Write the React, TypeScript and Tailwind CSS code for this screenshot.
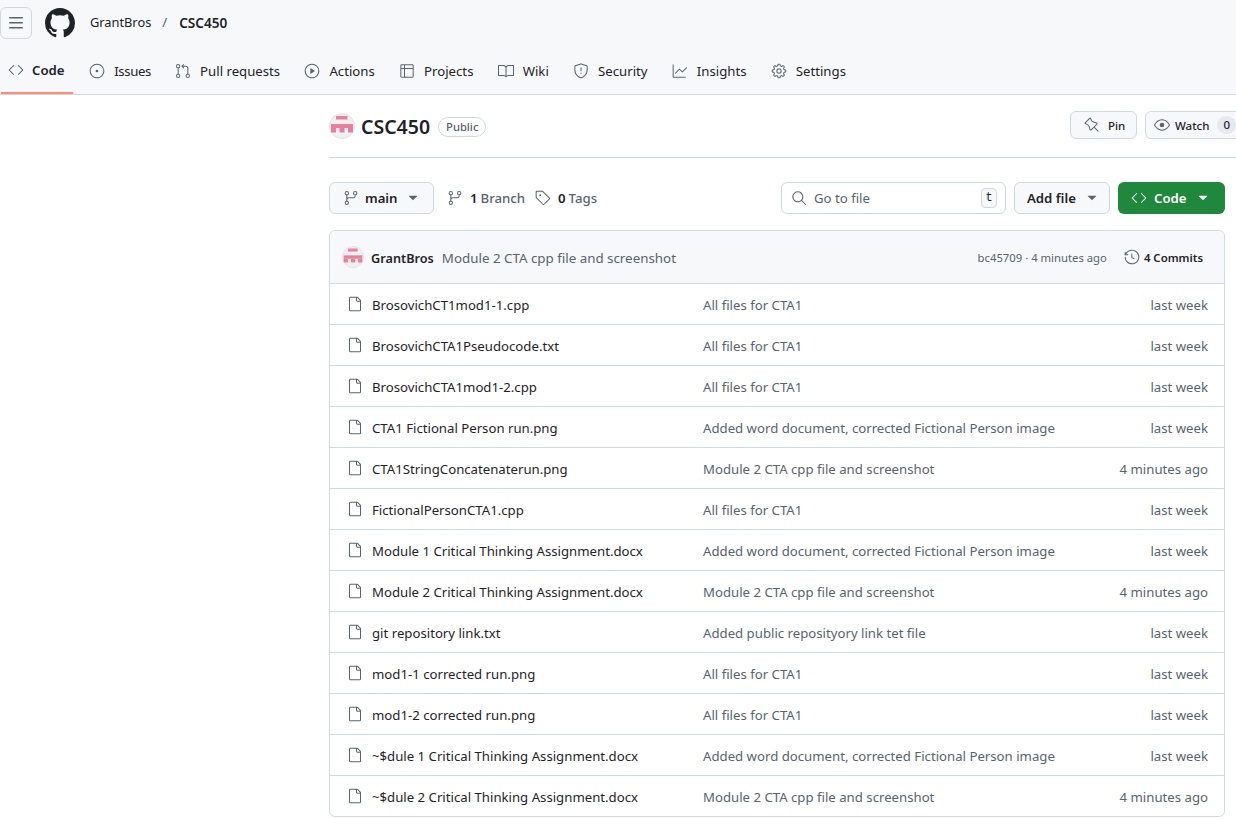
import React from 'react';
import {
  GoBook,
  GoCode,
  GoEye,
  GoFile,
  GoGear,
  GoGitBranch,
  GoGitPullRequest,
  GoGraph,
  GoHistory,
  GoIssueOpened,
  GoPin,
  GoPlay,
  GoSearch,
  GoShield,
  GoTable,
  GoTag,
  GoTriangleDown,
} from 'react-icons/go';

const tabs = [
  { label: 'Code', icon: GoCode, active: true },
  { label: 'Issues', icon: GoIssueOpened, narrow: true },
  { label: 'Pull requests', icon: GoGitPullRequest },
  { label: 'Actions', icon: GoPlay },
  { label: 'Projects', icon: GoTable },
  { label: 'Wiki', icon: GoBook },
  { label: 'Security', icon: GoShield },
  { label: 'Insights', icon: GoGraph },
  { label: 'Settings', icon: GoGear },
];

const CTA = 'All files for CTA1';
const WORD = 'Added word document, corrected Fictional Person image';
const MOD2 = 'Module 2 CTA cpp file and screenshot';

const files = [
  ['BrosovichCT1mod1-1.cpp', CTA, 'last week'],
  ['BrosovichCTA1Pseudocode.txt', CTA, 'last week'],
  ['BrosovichCTA1mod1-2.cpp', CTA, 'last week'],
  ['CTA1 Fictional Person run.png', WORD, 'last week'],
  ['CTA1StringConcatenaterun.png', MOD2, '4 minutes ago'],
  ['FictionalPersonCTA1.cpp', CTA, 'last week'],
  ['Module 1 Critical Thinking Assignment.docx', WORD, 'last week'],
  ['Module 2 Critical Thinking Assignment.docx', MOD2, '4 minutes ago'],
  ['git repository link.txt', 'Added public reposityory link tet file', 'last week'],
  ['mod1-1 corrected run.png', CTA, 'last week'],
  ['mod1-2 corrected run.png', CTA, 'last week'],
  ['~$dule 1 Critical Thinking Assignment.docx', WORD, 'last week'],
  ['~$dule 2 Critical Thinking Assignment.docx', MOD2, '4 minutes ago'],
];

function Avatar({ size }: { size: number }) {
  return (
    <svg width={size} height={size} viewBox="0 0 26 26" className="shrink-0">
      <circle cx="13" cy="13" r="12.5" fill="#f0f0f0" stroke="#dfe1e4" />
      <g fill="#e8809c">
        <rect x="7" y="3" width="11.5" height="3.5" />
        <rect x="2" y="11" width="22" height="4" />
        <rect x="2" y="15" width="5" height="4.5" />
        <rect x="10.5" y="15" width="5" height="4.5" />
        <rect x="19" y="15" width="5" height="4.5" />
      </g>
    </svg>
  );
}

export default function App() {
  return (
    <div className="h-[819px] overflow-hidden bg-white text-[#1f2328] font-['Noto_Sans',sans-serif] text-[13.2px]">
      {/* Repo header */}
      <header className="h-[95px] bg-[#f6f8fa] border-b border-[#d1d9e0]">
        <div className="mb-[1px] flex h-[46px] items-center">
          <button className="flex h-[32px] w-[32px] items-center justify-center rounded-md border border-[#d1d9e0] text-[#59636e]">
            <svg width="16" height="16" viewBox="0 0 16 16" fill="currentColor">
              <path d="M1 2.75A.75.75 0 0 1 1.75 2h12.5a.75.75 0 0 1 0 1.5H1.75A.75.75 0 0 1 1 2.75Zm0 5A.75.75 0 0 1 1.75 7h12.5a.75.75 0 0 1 0 1.5H1.75A.75.75 0 0 1 1 7.75ZM1.75 12h12.5a.75.75 0 0 1 0 1.5H1.75a.75.75 0 0 1 0-1.5Z" />
            </svg>
          </button>
          <svg width="30" height="30" viewBox="0 0 16 16" fill="#1f2328" className="ml-[13px]">
            <path d="M8 0c4.42 0 8 3.58 8 8a8.013 8.013 0 0 1-5.45 7.59c-.4.08-.55-.17-.55-.38 0-.27.01-1.13.01-2.2 0-.75-.25-1.23-.54-1.48 1.78-.2 3.65-.88 3.65-3.95 0-.88-.31-1.59-.82-2.15.08-.2.36-1.02-.08-2.12 0 0-.67-.22-2.2.82-.64-.18-1.32-.27-2-.27-.68 0-1.36.09-2 .27-1.53-1.03-2.2-.82-2.2-.82-.44 1.1-.16 1.92-.08 2.12-.51.56-.82 1.28-.82 2.15 0 3.06 1.86 3.75 3.64 3.95-.23.2-.44.55-.51 1.07-.46.21-1.61.55-2.33-.66-.15-.24-.6-.83-1.23-.82-.67.01-.27.38.01.53.34.19.73.9.82 1.13.16.45.68 1.31 2.69.94 0 .67.01 1.3.01 1.49 0 .21-.15.45-.55.38A7.995 7.995 0 0 1 0 8c0-4.42 3.58-8 8-8Z" />
          </svg>
          <span className="ml-[15px] text-[12.8px]">GrantBros</span>
          <span className="ml-[11px] text-[#59636e]">/</span>
          <span className="ml-[12px] text-[13.6px] font-semibold">CSC450</span>
        </div>
        <nav className="flex h-[47px] gap-[8.25px] pl-[1px]">
          {tabs.map((t) => {
            const Icon = t.icon;
            return (
              <div
                key={t.label}
                className={
                  t.active
                    ? 'flex h-[47px] w-[72px] items-center gap-[8px] border-b-2 border-[#fd8c73] pl-[7px] font-semibold'
                    : 'flex h-[47px] items-center gap-[9px] px-[8px]'
                }
              >
                <Icon size={16} className="text-[#59636e]" />
                <span className={t.narrow ? 'pt-[2px] tracking-[-0.4px]' : 'pt-[2px]'}>{t.label}</span>
              </div>
            );
          })}
        </nav>
      </header>

      <main className="pl-[329px] pr-[11px]">
        {/* Title row */}
        <div className="mr-[-11px] flex h-[63px] items-start justify-between overflow-hidden border-b border-[#d1d9e0] pt-[16px]">
          <div className="flex items-center">
            <Avatar size={26} />
            <span className="ml-[6px] pt-[2px] text-[19.5px] font-semibold leading-[28px]">CSC450</span>
            <span className="ml-[8px] mt-[1px] rounded-full border border-[#d1d9e0] px-[7px] text-[11.2px] font-medium leading-[18px] text-[#59636e]">
              Public
            </span>
          </div>
          <div className="flex shrink-0 gap-[8px] text-[11.5px] font-medium">
            <div className="flex h-[28px] w-[67px] items-center rounded-md border border-[#d1d9e0] bg-[#f6f8fa] pl-[13px]">
              <GoPin size={16} className="text-[#59636e]" />
              <span className="ml-[8px] pt-[2px]">Pin</span>
            </div>
            <div className="mr-[-6px] flex h-[28px] w-[97px] items-center rounded-md border border-[#d1d9e0] bg-[#f6f8fa] pl-[8px]">
              <GoEye size={16} className="text-[#59636e]" />
              <span className="ml-[5px] pt-[2px]">Watch</span>
              <span className="ml-[8px] rounded-full bg-[#e6eaef] px-[6px] leading-[18px]">0</span>
            </div>
          </div>
        </div>

        {/* Branch and file actions */}
        <div className="mt-[24px] flex h-[32px] items-center">
          <div className="flex h-[32px] w-[105px] items-center rounded-md border border-[#d1d9e0] bg-[#f6f8fa] pl-[13px] font-medium">
            <GoGitBranch size={16} className="text-[#59636e]" />
            <span className="ml-[6px] pt-[2px] font-semibold">main</span>
            <GoTriangleDown size={16} className="ml-[7px] text-[#59636e]" />
          </div>
          <div className="ml-[13px] flex items-center text-[#59636e]">
            <GoGitBranch size={16} />
            <span className="ml-[7px] pt-[2px] font-semibold text-[#1f2328]">1</span>
            <span className="ml-[3px] pt-[2px] font-medium">Branch</span>
            <GoTag size={16} className="ml-[10px]" />
            <span className="ml-[7px] pt-[2px] font-semibold text-[#1f2328]">0</span>
            <span className="ml-[3px] pt-[2px] font-medium">Tags</span>
          </div>
          <div className="ml-auto flex h-[32px] w-[225px] items-center rounded-md border border-[#d1d9e0] pl-[9px] pr-[8px] text-[#59636e]">
            <GoSearch size={16} />
            <span className="ml-[7px] pt-[2px]">Go to file</span>
            <kbd className="ml-auto flex h-[20px] w-[16px] items-center justify-center rounded-[4px] border border-[#d1d9e0] bg-[#f6f8fa] font-['Liberation_Mono',monospace] text-[12px] text-[#1f2328]">
              t
            </kbd>
          </div>
          <div className="ml-[8px] flex h-[32px] w-[96px] items-center rounded-md border border-[#d1d9e0] bg-[#f6f8fa] pl-[12px] font-semibold">
            <span className="pt-[2px]">Add file</span>
            <GoTriangleDown size={16} className="ml-[8px] text-[#59636e]" />
          </div>
          <div className="ml-[8px] flex h-[32px] w-[107px] items-center rounded-md bg-[#1f883d] pl-[13px] font-semibold text-white">
            <GoCode size={16} />
            <span className="ml-[7px] pt-[2px]">Code</span>
            <GoTriangleDown size={16} className="ml-[8px]" />
          </div>
        </div>

        {/* File table */}
        <div className="mt-[16px] rounded-md border border-[#d1d9e0]">
          <div className="flex h-[52px] items-center rounded-t-md bg-[#f6f8fa] pl-[12px] pr-[21px]">
            <Avatar size={22} />
            <span className="ml-[7px] pt-[3px] text-[12.7px] font-semibold">GrantBros</span>
            <span className="ml-[8px] pt-[3px] text-[13.35px] text-[#59636e]">{MOD2}</span>
            <span className="ml-auto pt-[3px] text-[11.3px] text-[#59636e]">bc45709 · 4 minutes ago</span>
            <GoHistory size={16} className="ml-[17px] text-[#59636e]" />
            <span className="ml-[4px] pt-[2px] text-[11.4px] font-semibold">4 Commits</span>
          </div>
          {files.map(([name, msg, when]) => (
            <div
              key={name}
              className="grid h-[41px] grid-cols-[373px_1fr_auto] items-center border-t border-[#d1d9e0] pl-[17px] pr-[16px]"
            >
              <div className="flex items-center">
                <GoFile size={16} className="text-[#59636e]" />
                <span className="ml-[9px] pt-[3px]">{name}</span>
              </div>
              <span className="-ml-[17px] pt-[3px] text-[#59636e]">{msg}</span>
              <span className="pt-[3px] text-[#59636e]">{when}</span>
            </div>
          ))}
        </div>
      </main>
    </div>
  );
}
